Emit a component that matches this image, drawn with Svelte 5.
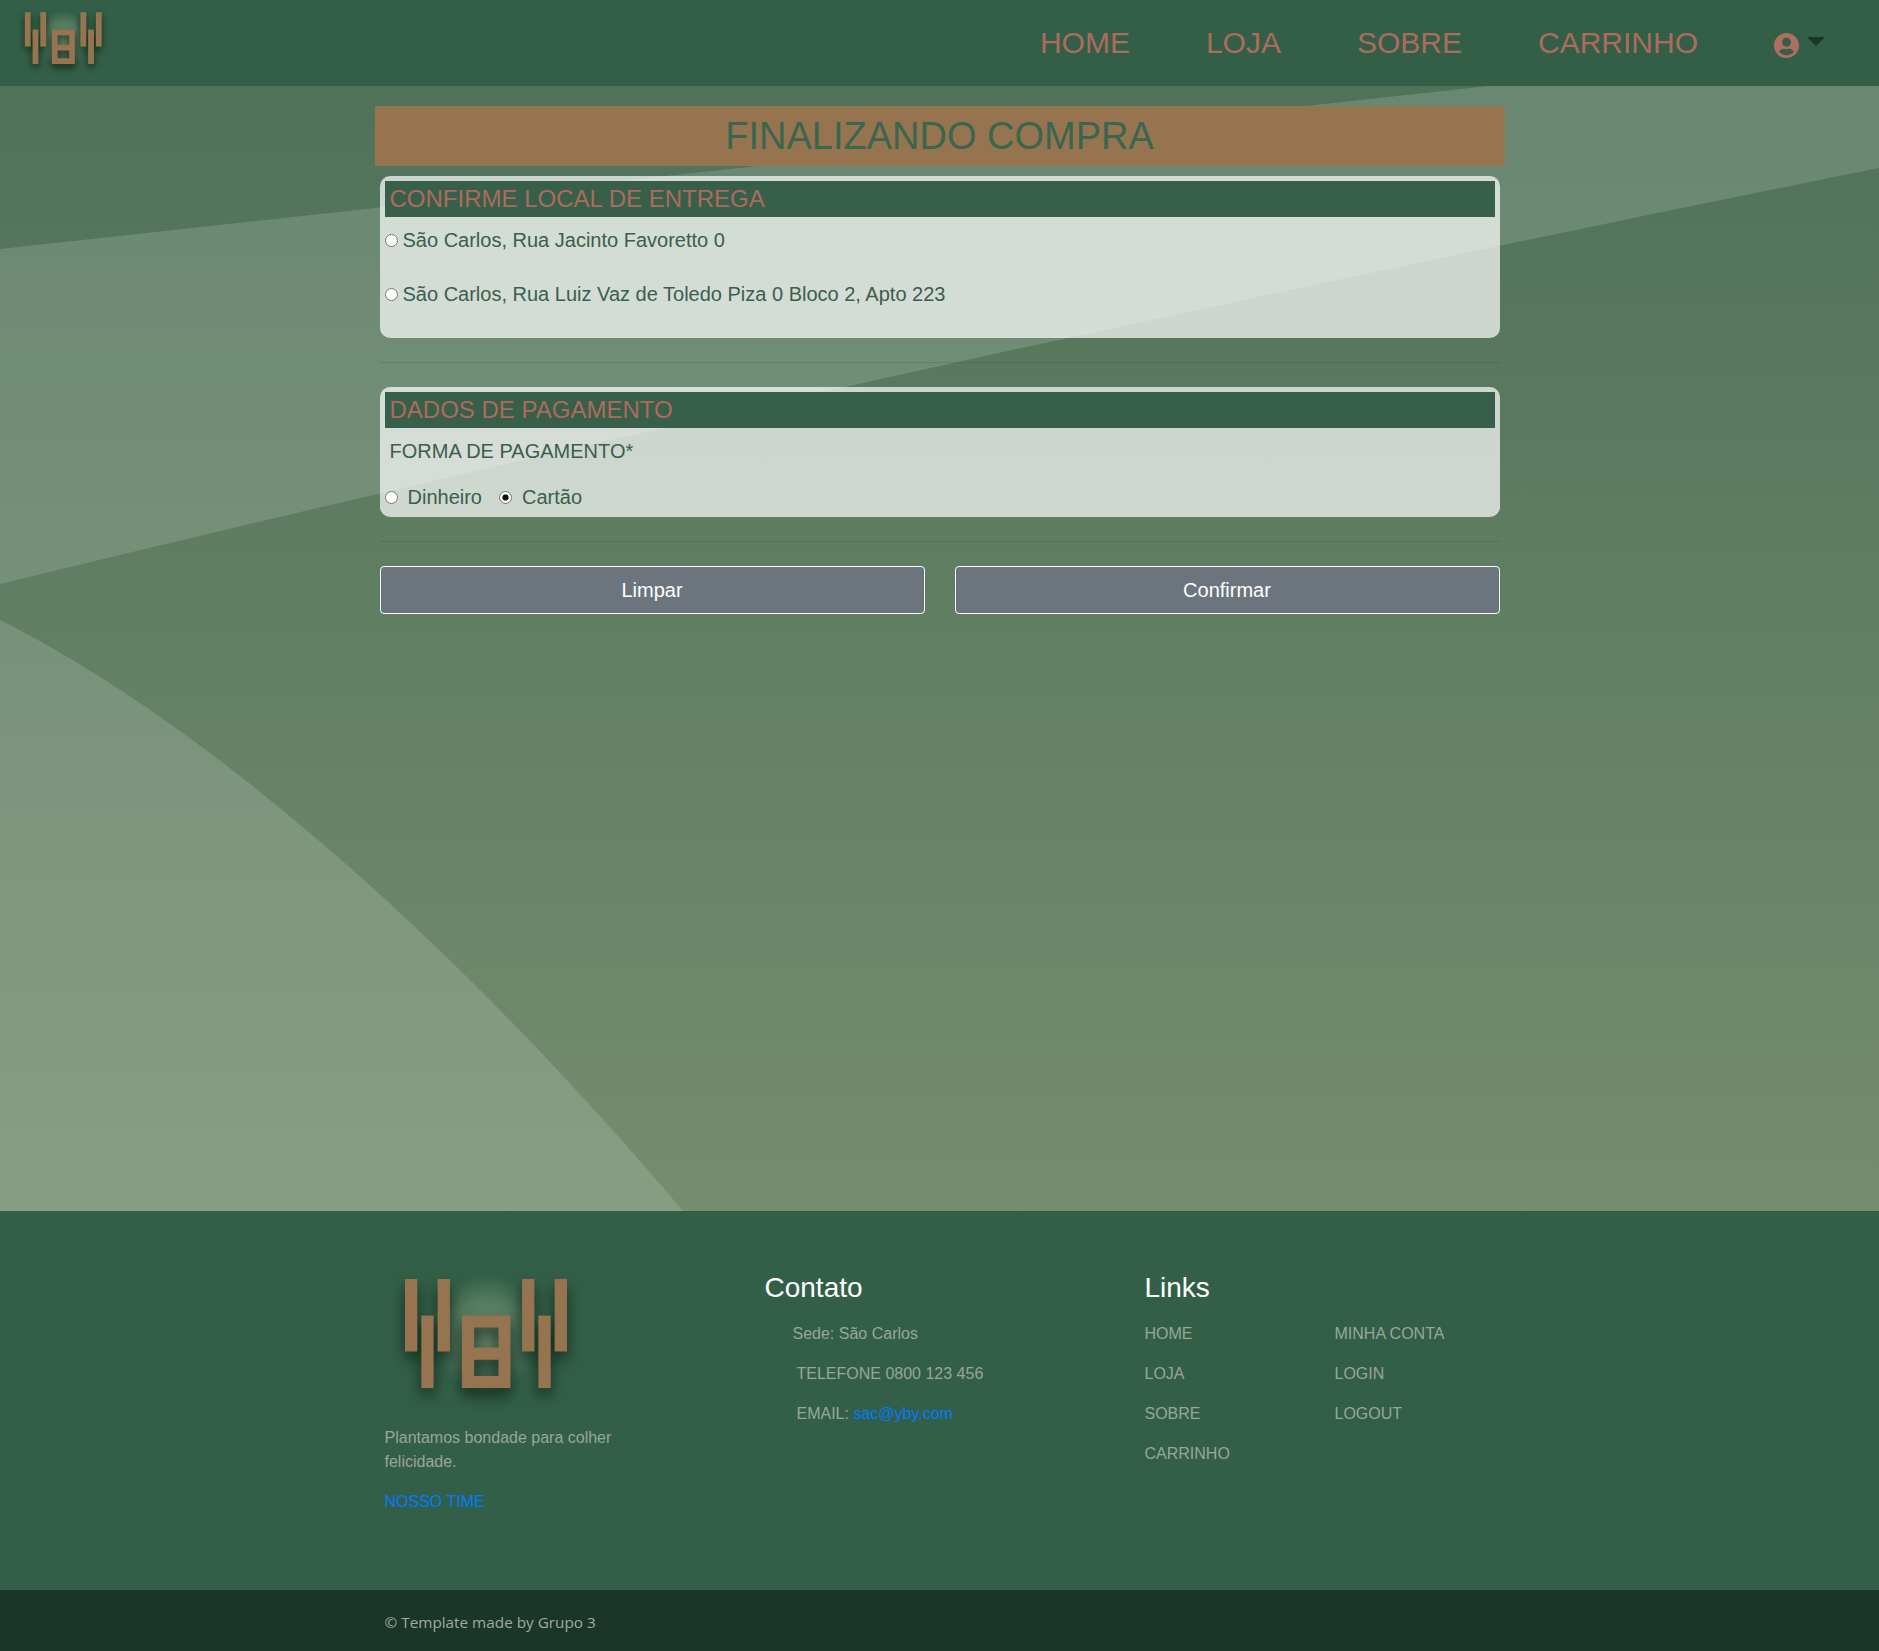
<script lang="ts">
	const navItems = ['HOME', 'LOJA', 'SOBRE', 'CARRINHO'];
	const addresses = [
		'São Carlos, Rua Jacinto Favoretto 0',
		'São Carlos, Rua Luiz Vaz de Toledo Piza 0 Bloco 2, Apto 223'
	];
	const linksLeft = ['HOME', 'LOJA', 'SOBRE', 'CARRINHO'];
	const linksRight = ['MINHA CONTA', 'LOGIN', 'LOGOUT'];

	// bars of the logo, in the coordinates of its viewBox
	const bars = [
		[75, 57, 37, 218],
		[124, 167, 37, 218],
		[173, 57, 37, 218],
		[427, 57, 37, 218],
		[476, 167, 37, 218],
		[525, 57, 37, 218]
	];

	let address = $state('');
	let payment = $state('cartao');
</script>

{#snippet logo(cls: string)}
	<svg class={cls} viewBox="0 0 640 460" aria-label="Logo">
		<defs>
			<radialGradient id="logo-glow">
				<stop offset="0" stop-color="#8aa583" stop-opacity="0.75" />
				<stop offset="0.6" stop-color="#7f9c7c" stop-opacity="0.4" />
				<stop offset="1" stop-color="#7f9c7c" stop-opacity="0" />
			</radialGradient>
		</defs>
		<circle cx="320" cy="220" r="175" fill="url(#logo-glow)" />
		<g class="logo-marks">
			{#each bars as [x, y, w, h]}
				<rect {x} {y} width={w} height={h} />
			{/each}
			<path
				fill-rule="evenodd"
				d="M246 167h146v218h-146zM283 203v60h73v-60zM283 300v49h73v-49z"
			/>
		</g>
	</svg>
{/snippet}

<header class="topbar">
	{@render logo('logo-small')}
	<nav class="nav">
		{#each navItems as item}
			<a href="#top" class="nav-link">{item}</a>
		{/each}
		<span class="account">
			<svg class="account-icon" viewBox="0 0 496 496" aria-hidden="true">
				<path
					d="M248 0C111 0 0 111 0 248s111 248 248 248 248-111 248-248S385 0 248 0zm0 96c48.6 0 88 39.4 88 88s-39.4 88-88 88-88-39.4-88-88 39.4-88 88-88zm0 344c-58.7 0-111.3-26.6-146.5-68.2 18.8-35.4 55.6-59.8 98.5-59.8 2.4 0 4.8.4 7.1 1.1 13 4.2 26.6 6.9 40.9 6.9 14.3 0 28-2.7 40.9-6.9 2.3-.7 4.7-1.1 7.1-1.1 42.9 0 79.7 24.4 98.5 59.8C359.3 413.4 306.7 440 248 440z"
				/>
			</svg>
			<span class="caret"></span>
		</span>
	</nav>
</header>

<main class="main">
	<svg class="backdrop" viewBox="0 0 1879 1125" preserveAspectRatio="none" aria-hidden="true">
		<path d="M0 163 L1488 0 H1879 V82 Q900 279 0 498 Z" />
		<path d="M0 534 C230 650 480 885 683 1125 H0 Z" />
	</svg>

	<div class="content">
		<h1 class="page-title">FINALIZANDO COMPRA</h1>

		<section class="card card-address">
			<h2 class="card-title">CONFIRME LOCAL DE ENTREGA</h2>
			{#each addresses as item}
				<label class="address-row">
					<input type="radio" name="address" value={item} bind:group={address} />
					<span>{item}</span>
				</label>
			{/each}
		</section>

		<hr class="divider" />

		<section class="card">
			<h2 class="card-title">DADOS DE PAGAMENTO</h2>
			<p class="field-label">FORMA DE PAGAMENTO*</p>
			<div class="payment-row">
				<label class="payment-option">
					<input type="radio" name="payment" value="dinheiro" bind:group={payment} />
					<span>Dinheiro</span>
				</label>
				<label class="payment-option">
					<input type="radio" name="payment" value="cartao" bind:group={payment} />
					<span>Cartão</span>
				</label>
			</div>
		</section>

		<hr class="divider" />

		<div class="actions">
			<button type="button" class="btn">Limpar</button>
			<button type="button" class="btn">Confirmar</button>
		</div>
	</div>
</main>

<footer class="footer">
	<div class="footer-grid">
		<div class="footer-col">
			{@render logo('logo-large')}
			<p class="about">Plantamos bondade para colher felicidade.</p>
			<a href="#top" class="blue-link">NOSSO TIME</a>
		</div>
		<div class="footer-col">
			<h3 class="footer-title">Contato</h3>
			<p class="contact-line sede">Sede: São Carlos</p>
			<p class="contact-line">TELEFONE 0800 123 456</p>
			<p class="contact-line">EMAIL: <a href="#top" class="blue-link">sac@yby.com</a></p>
		</div>
		<div class="footer-col">
			<h3 class="footer-title">Links</h3>
			<div class="link-columns">
				<div>
					{#each linksLeft as link}
						<a href="#top" class="footer-link">{link}</a>
					{/each}
				</div>
				<div>
					{#each linksRight as link}
						<a href="#top" class="footer-link">{link}</a>
					{/each}
				</div>
			</div>
		</div>
	</div>
</footer>

<div class="copyright">
	<div class="copyright-inner">© Template made by Grupo 3</div>
</div>

<style>
	:global(body) {
		margin: 0;
		font-family: 'Liberation Sans', Arial, sans-serif;
	}

	a {
		text-decoration: none;
	}

	.topbar {
		height: 86px;
		background: #335f48;
		display: flex;
		align-items: flex-start;
		justify-content: space-between;
	}

	.logo-small {
		width: 101px;
		height: 73px;
		margin: 3px 0 0 13px;
	}

	.logo-marks {
		fill: #96744f;
		filter: drop-shadow(0 24px 22px rgba(10, 30, 20, 0.8));
	}

	.nav {
		display: flex;
		align-items: flex-start;
		padding: 26px 54px 0 0;
		gap: 76px;
	}

	.nav-link {
		font-size: 30px;
		line-height: 34px;
		color: #ad6b5b;
	}

	.account {
		display: flex;
		align-items: flex-start;
		gap: 8px;
		padding-top: 7px;
	}

	.account-icon {
		width: 25px;
		height: 25px;
		fill: #b06e5f;
	}

	.caret {
		margin-top: 4px;
		border-top: 9px solid #1a3628;
		border-left: 9px solid transparent;
		border-right: 9px solid transparent;
	}

	.main {
		position: relative;
		height: 1125px;
		overflow: hidden;
		background: linear-gradient(180deg, #4f7259, #748d6d);
	}

	.backdrop {
		position: absolute;
		inset: 0;
		width: 100%;
		height: 100%;
		fill: rgba(255, 255, 255, 0.15);
	}

	.content {
		position: relative;
		width: 1130px;
		margin: 0 auto;
		padding-top: 20px;
	}

	.page-title {
		margin: 0 0 10px;
		height: 60px;
		background: #96744f;
		color: #3a6650;
		font-size: 38px;
		font-weight: 400;
		line-height: 60px;
		text-align: center;
	}

	.card {
		margin: 0 5px;
		padding: 5px 5px 0;
		border-radius: 10px;
		background: rgba(255, 255, 255, 0.7);
		color: #3a5f4c;
		font-size: 20px;
		height: 125px;
	}

	.card-address {
		height: 157px;
	}

	.card-title {
		margin: 0;
		padding-left: 5px;
		background: #385f4a;
		color: #ad6b5b;
		font-size: 24px;
		font-weight: 400;
		line-height: 36px;
	}

	.address-row {
		display: flex;
		align-items: center;
		gap: 5px;
		height: 30px;
		margin-top: 8px;
		margin-bottom: 16px;
	}

	.address-row + .address-row {
		margin-top: 24px;
	}

	input[type='radio'] {
		appearance: none;
		box-sizing: border-box;
		width: 13px;
		height: 13px;
		margin: 0;
		border: 1px solid #767676;
		border-radius: 50%;
		background: #fff;
	}

	input[type='radio']:checked {
		background: radial-gradient(circle, #111 0 2.8px, #fff 3.4px);
	}

	.field-label {
		margin: 8px 0 0 5px;
		line-height: 30px;
	}

	.payment-row {
		display: flex;
		gap: 17px;
		margin-top: 16px;
		line-height: 30px;
	}

	.payment-option {
		display: flex;
		align-items: center;
		gap: 10px;
	}

	.divider {
		margin: 24px 5px;
		border: 0;
		border-top: 1px solid rgba(0, 0, 0, 0.1);
	}

	.actions {
		display: flex;
		gap: 30px;
		margin: 0 5px;
	}

	.btn {
		flex: 1;
		height: 48px;
		border: 1px solid #fff;
		border-radius: 4px;
		background: #6c757d;
		color: #fff;
		font-family: inherit;
		font-size: 20px;
	}

	.footer {
		height: 379px;
		background: #335f48;
	}

	.footer-grid {
		width: 1140px;
		margin: 0 auto;
		display: grid;
		grid-template-columns: repeat(3, 380px);
	}

	.footer-col {
		padding: 57px 15px 0;
	}

	.logo-large {
		display: block;
		width: 213px;
		height: 153px;
		margin: -8px 0 13px -4.5px;
	}

	.about {
		margin: 0 0 16px;
		width: 280px;
		color: #9aa59b;
		font-size: 16px;
		line-height: 24px;
	}

	.blue-link {
		color: #007bff;
		font-size: 16px;
		line-height: 24px;
	}

	.footer-title {
		margin: 1px 0 15px;
		color: #fff;
		font-size: 28px;
		font-weight: 400;
		line-height: 38px;
	}

	.contact-line {
		margin: 0 0 16px 32px;
		color: #9aa59b;
		font-size: 16px;
		line-height: 24px;
	}

	.sede {
		margin-left: 28px;
	}

	.link-columns {
		display: grid;
		grid-template-columns: 190px 1fr;
	}

	.footer-link {
		display: block;
		margin-bottom: 16px;
		color: #9aa59b;
		font-size: 16px;
		line-height: 24px;
	}

	.copyright {
		height: 61px;
		background: #1a3628;
	}

	.copyright-inner {
		width: 1110px;
		margin: 0 auto;
		color: #a0aaa3;
		font-family: 'Open Sans', sans-serif;
		font-size: 15.3px;
		line-height: 64px;
	}
</style>
